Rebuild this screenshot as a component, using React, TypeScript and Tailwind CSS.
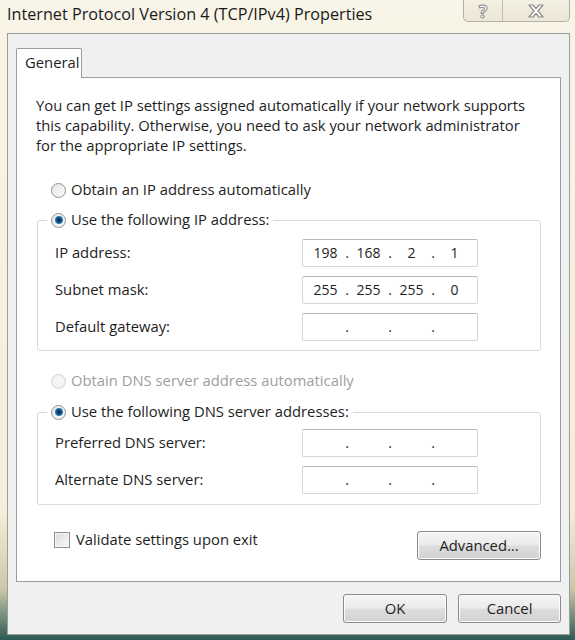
import React from "react";

type IpProps = {
  parts?: string[];
};

function IpBox({ parts = ["", "", "", ""] }: IpProps) {
  return (
    <div className="w-[176px] h-[28px] bg-white border border-[#d3d6da] border-t-[#b4b7bc] rounded-[2px] flex items-center pl-[4px] text-[14px] text-[#1e1e1e]">
      {parts.map((p, i) => (
        <React.Fragment key={i}>
          <span className="w-[37px] text-center">{p}</span>
          {i < 3 && <span className="w-[6px] text-center">.</span>}
        </React.Fragment>
      ))}
    </div>
  );
}

function Radio({ checked, disabled }: { checked?: boolean; disabled?: boolean }) {
  return (
    <span
      className={
        "w-[15px] h-[15px] rounded-full border flex items-center justify-center shrink-0 " +
        (disabled
          ? "border-[#cfd0d1] bg-[#f4f4f4]"
          : "border-[#8f9091] bg-[linear-gradient(135deg,#e6e6e6,#fbfbfb)]")
      }
    >
      {checked && (
        <span className="w-[8px] h-[8px] rounded-full bg-[radial-gradient(circle,#0b335f_25%,#2a7cbd_65%,#8ed4f2_100%)]" />
      )}
    </span>
  );
}

function Field({ label, parts }: { label: string; parts?: string[] }) {
  return (
    <div className="flex items-center">
      <span className="w-[247px]">{label}</span>
      <IpBox parts={parts} />
    </div>
  );
}

function WinButton({ children, className = "" }: { children: React.ReactNode; className?: string }) {
  return (
    <button
      className={
        "h-[29px] rounded-[3px] border border-[#8a8a8a] bg-[linear-gradient(to_bottom,#f4f4f4_0%,#ebebeb_48%,#dddddd_52%,#d2d2d2_100%)] shadow-[inset_0_0_0_1px_#fcfcfc] text-[14.8px] text-[#1e1e1e] " +
        className
      }
    >
      {children}
    </button>
  );
}

const intro = [
  "You can get IP settings assigned automatically if your network supports",
  "this capability. Otherwise, you need to ask your network administrator",
  "for the appropriate IP settings.",
];

export default function App() {
  return (
    <div className="w-[575px] h-[640px] overflow-hidden flex flex-col font-['Open_Sans',sans-serif] text-[14.8px] leading-[17.5px] text-[#1e1e1e] bg-[linear-gradient(to_bottom,#f8f4e7_0%,#f4eed8_80%,#c9c9a8_92%,#2c5a55_100%)]">
      {/* title bar */}
      <div className="h-[33px] flex items-start shrink-0">
        <div className="pl-[7px] pt-[4px] text-[16.2px] leading-[21px] text-[#1a1a1a]">
          Internet Protocol Version 4 (TCP/IPv4) Properties
        </div>
        <div className="ml-auto mr-[5px] flex h-[22px] rounded-b-[5px] border border-t-0 border-[#b3b0a6] bg-[linear-gradient(to_bottom,#f3efe2,#ebe6d5)]">
          <div className="w-[39px] flex items-center justify-center border-r border-[#c2beb2] text-[18px] font-bold text-white [-webkit-text-stroke:1px_#8a8a8a] leading-none">
            ?
          </div>
          <div className="w-[66px] flex items-center justify-center">
            <svg width="20" height="16" viewBox="0 0 20 16">
              <path
                d="M3 2 L7 2 L10 5.5 L13 2 L17 2 L12 8 L17 14 L13 14 L10 10.5 L7 14 L3 14 L8 8 Z"
                fill="#fdfdfd"
                stroke="#8c8c8c"
                strokeWidth="1.2"
                strokeLinejoin="round"
              />
            </svg>
          </div>
        </div>
      </div>

      {/* client area */}
      <div className="ml-[7px] w-[563px] h-[602px] shrink-0 bg-[#f0f0f0] border border-[#9d9d9d] flex flex-col px-[8px]">
        <div className="pt-[13px] flex">
          <div className="w-[66px] h-[30px] bg-white border border-b-0 border-[#9a9ca2] rounded-t-[2px] pl-[8px] pt-[5px] relative top-[1px]">
            General
          </div>
        </div>
        <div className="h-[505px] bg-white border border-[#9a9ca2] flex flex-col pl-[19px] pr-[19px] pt-[17px]">
          <div className="flex flex-col leading-[20.2px]">
            {intro.map((line) => (
              <div key={line} className="whitespace-nowrap">
                {line}
              </div>
            ))}
          </div>

          <div className="mt-[24.5px] pl-[15px] h-[20px] flex items-center gap-[5px]">
            <Radio />
            <span>Obtain an IP address automatically</span>
          </div>

          <fieldset className="mt-[10px] ml-[1px] border border-[#d6dbe0] rounded-[3px] pb-[9px]">
            <legend className="ml-[9px] px-[4px] h-[20px] flex items-center gap-[5px]">
              <Radio checked />
              <span>Use the following IP address:</span>
            </legend>
            <div className="pl-[17px] pt-[9px] flex flex-col gap-[9px]">
              <Field label="IP address:" parts={["198", "168", "2", "1"]} />
              <Field label="Subnet mask:" parts={["255", "255", "255", "0"]} />
              <Field label="Default gateway:" />
            </div>
          </fieldset>

          <div className="mt-[20px] pl-[15px] h-[20px] flex items-center gap-[5px] text-[#9e9e9e]">
            <Radio disabled />
            <span>Obtain DNS server address automatically</span>
          </div>

          <fieldset className="mt-[11px] ml-[1px] border border-[#d6dbe0] rounded-[3px] pb-[10px]">
            <legend className="ml-[9px] px-[4px] h-[20px] flex items-center gap-[5px]">
              <Radio checked />
              <span>Use the following DNS server addresses:</span>
            </legend>
            <div className="pl-[17px] pt-[7px] flex flex-col gap-[9px]">
              <Field label="Preferred DNS server:" />
              <Field label="Alternate DNS server:" />
            </div>
          </fieldset>

          <div className="mt-[26px] flex items-start">
            <div className="pl-[18px] flex items-center gap-[6px]">
              <span className="w-[16px] h-[16px] border border-[#8f8f8f] bg-[linear-gradient(135deg,#dcdcdc,#f8f8f8)] shadow-[inset_0_0_0_1px_#f4f4f4]" />
              <span>Validate settings upon exit</span>
            </div>
            <WinButton className="ml-auto w-[124px] h-[28px]">Advanced...</WinButton>
          </div>
        </div>

        <div className="mt-[12px] flex justify-end gap-[11px]">
          <WinButton className="w-[104px]">OK</WinButton>
          <WinButton className="w-[103px]">Cancel</WinButton>
        </div>
      </div>
    </div>
  );
}
